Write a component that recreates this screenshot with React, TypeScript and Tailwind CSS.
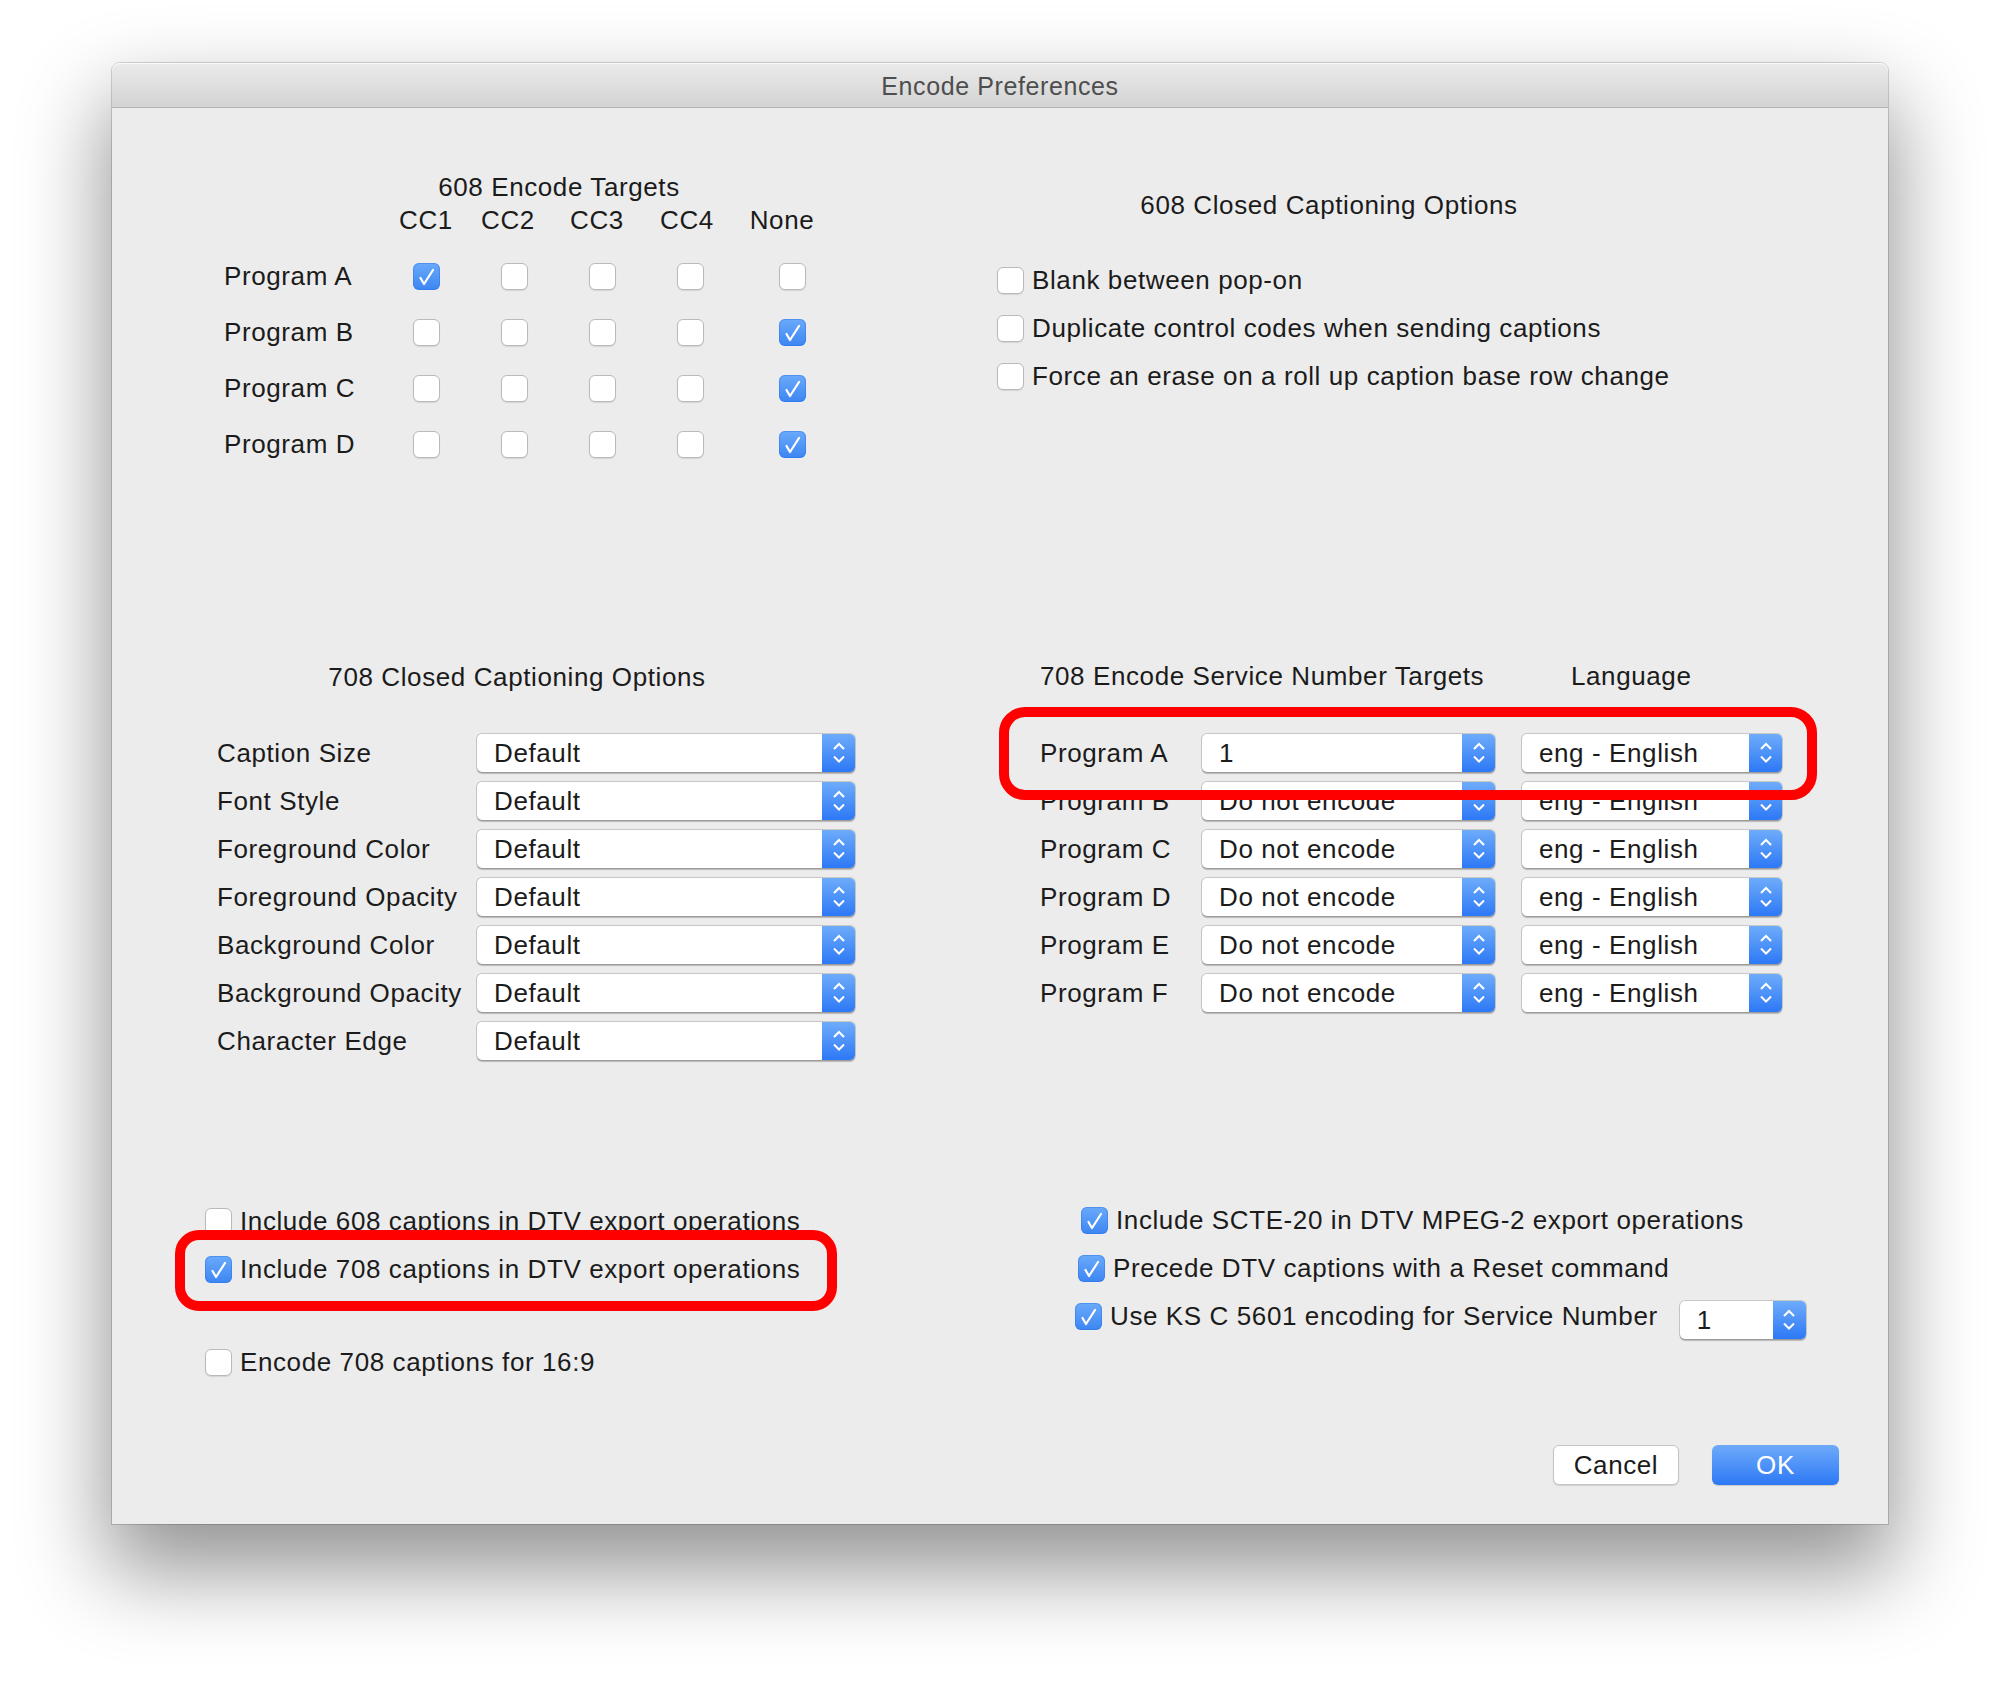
import React from 'react';

const programs608 = ['Program A', 'Program B', 'Program C', 'Program D'];
const checked608: Record<string, number> = {'Program A': 0, 'Program B': 4, 'Program C': 4, 'Program D': 4};

const headers608 = [
  {label: 'CC1', cls: ''},
  {label: 'CC2', cls: 'pr-[12px]'},
  {label: 'CC3', cls: 'pr-[10px]'},
  {label: 'CC4', cls: 'pr-[6px]'},
  {label: 'None', cls: 'pr-[20px]'}
];

const options708 = [
  'Caption Size',
  'Font Style',
  'Foreground Color',
  'Foreground Opacity',
  'Background Color',
  'Background Opacity',
  'Character Edge'
];

const services708 = [
  {name: 'Program A', value: '1'},
  {name: 'Program B', value: 'Do not encode'},
  {name: 'Program C', value: 'Do not encode'},
  {name: 'Program D', value: 'Do not encode'},
  {name: 'Program E', value: 'Do not encode'},
  {name: 'Program F', value: 'Do not encode'}
];

function Check({checked}: {checked?: boolean}) {
  if (checked) {
    return (
      <span className="flex h-[27px] w-[27px] shrink-0 items-center justify-center rounded-[6px] bg-gradient-to-b from-[#6aaafa] to-[#3c85f3] shadow-[inset_0_0_0_1px_rgba(45,115,230,0.45)]">
        <svg width="27" height="27" viewBox="0 0 27 27">
          <path d="M7.5 15 L11 21 L20 7" fill="none" stroke="white" strokeWidth="2.2" strokeLinecap="round" strokeLinejoin="round" />
        </svg>
      </span>
    );
  }
  return <span className="h-[27px] w-[27px] shrink-0 rounded-[6px] border border-[#bababa] bg-white shadow-[0_1px_1px_rgba(0,0,0,0.1)]" />;
}

function Stepper() {
  return (
    <span className="flex w-[33px] shrink-0 items-center justify-center rounded-r-[5px] bg-gradient-to-b from-[#6eabfa] to-[#2c78f5]">
      <svg width="14" height="24" viewBox="0 0 14 24">
        <path d="M2 8 L7 3 L12 8 M2 15.5 L7 20.5 L12 15.5" fill="none" stroke="white" strokeWidth="2" />
      </svg>
    </span>
  );
}

function Select({value, w}: {value: string; w: string}) {
  return (
    <div className={`flex h-[38px] ${w} rounded-[5px] bg-white shadow-[0_0_0_1px_rgba(0,0,0,0.15),0_1.5px_1px_rgba(0,0,0,0.22)]`}>
      <span className="flex flex-1 items-center pl-[17px] leading-none">{value}</span>
      <Stepper />
    </div>
  );
}

function CheckRow({label, checked, cls = ''}: {label: string; checked?: boolean; cls?: string}) {
  return (
    <div className={`flex h-[48px] items-center gap-[8px] ${cls}`}>
      <Check checked={checked} />
      <span>{label}</span>
    </div>
  );
}

export default function App() {
  return (
    <div className="h-[1684px] w-[2000px] overflow-hidden bg-white pl-[112px] pt-[63px]">
      <div className="relative h-[1461px] w-[1776px] rounded-t-[8px] bg-[#ececec] font-['Liberation_Sans',Arial,sans-serif] text-[26px] tracking-[0.6px] text-[#1b1b1b] shadow-[0_42px_85px_6px_rgba(0,0,0,0.42),0_0_0_1px_rgba(0,0,0,0.16)]">
        {/* title bar */}
        <div className="flex h-[45px] items-center justify-center rounded-t-[8px] border-b border-[#b3b3b3] bg-gradient-to-b from-[#ebebeb] to-[#d3d3d3] pt-[3px] text-[25px] tracking-[0.6px] text-[#4e4e4e] shadow-[inset_0_1px_0_rgba(255,255,255,0.8)]">
          Encode Preferences
        </div>

        {/* 608 */}
        <div className="flex h-[552px]">
          <div className="ml-[112px] w-[773px] pt-[62px]">
            <div className="flex h-[34px] w-[670px] items-center justify-center">608 Encode Targets</div>
            <div className="-mt-[3px] grid h-[34px] grid-cols-[158px_88px_88px_88px_88px_116px] items-center">
              <span />
              {headers608.map((h) => (
                <span key={h.label} className={`text-center ${h.cls}`}>{h.label}</span>
              ))}
            </div>
            <div className="mt-[13px]">
              {programs608.map((p) => (
                <div key={p} className="grid h-[56px] grid-cols-[158px_88px_88px_88px_88px_116px] items-center">
                  <span>{p}</span>
                  {[0, 1, 2, 3, 4].map((i) => (
                    <span key={i} className="flex justify-center">
                      <Check checked={checked608[p] === i} />
                    </span>
                  ))}
                </div>
              ))}
            </div>
          </div>
          <div className="flex-1 pt-[80px]">
            <div className="flex h-[34px] w-[664px] items-center justify-center">608 Closed Captioning Options</div>
            <div className="mt-[34px]">
              <CheckRow label="Blank between pop-on" />
              <CheckRow label="Duplicate control codes when sending captions" />
              <CheckRow label="Force an erase on a roll up caption base row change" />
            </div>
          </div>
        </div>

        {/* 708 */}
        <div className="flex h-[536px]">
          <div className="ml-[105px] w-[823px]">
            <div className="flex h-[34px] w-[600px] items-center justify-center">708 Closed Captioning Options</div>
            <div className="mt-[35px]">
              {options708.map((o) => (
                <div key={o} className="flex h-[48px] items-center">
                  <span className="w-[260px]">{o}</span>
                  <Select value="Default" w="w-[378px]" />
                </div>
              ))}
            </div>
          </div>
          <div className="flex-1">
            <div className="-mt-[3px] grid h-[34px] grid-cols-[162px_293px_27px_260px] items-center">
              <span className="col-span-3">708 Encode Service Number Targets</span>
              <span className="pl-[49px]">Language</span>
            </div>
            <div className="mt-[38px]">
              {services708.map((s) => (
                <div key={s.name} className="grid h-[48px] grid-cols-[162px_293px_27px_260px] items-center">
                  <span>{s.name}</span>
                  <Select value={s.value} w="w-[293px]" />
                  <span />
                  <Select value="eng - English" w="w-[260px]" />
                </div>
              ))}
            </div>
          </div>
        </div>

        {/* export options */}
        <div className="flex h-[328px] flex-col">
          <div className="flex h-[249px]">
            <div className="ml-[93px] w-[876px] pt-[1px]">
              <CheckRow label="Include 608 captions in DTV export operations" />
              <CheckRow label="Include 708 captions in DTV export operations" checked />
              <CheckRow label="Encode 708 captions for 16:9" cls="mt-[45px]" />
            </div>
            <div className="flex-1">
              <CheckRow label="Include SCTE-20 in DTV MPEG-2 export operations" checked />
              <CheckRow label="Precede DTV captions with a Reset command" checked cls="-ml-[3px]" />
              <div className="-ml-[6px] flex h-[48px] items-center">
                <CheckRow label="Use KS C 5601 encoding for Service Number" checked />
                <div className="ml-[22px] pt-[8px]">
                  <Select value="1" w="w-[126px]" />
                </div>
              </div>
            </div>
          </div>
          <div className="flex justify-end gap-[33px] pr-[49px]">
            <button className="h-[40px] w-[126px] rounded-[6px] border border-[#c4c4c4] bg-white text-[26px] tracking-[0.6px] text-[#1b1b1b] shadow-[0_1px_1px_rgba(0,0,0,0.12)]">
              Cancel
            </button>
            <button className="h-[40px] w-[127px] rounded-[6px] bg-gradient-to-b from-[#6eaafa] to-[#2c78f5] text-[26px] tracking-[0.6px] text-white shadow-[0_1px_1px_rgba(0,0,0,0.15)]">
              OK
            </button>
          </div>
        </div>

        {/* highlight marks */}
        <div className="pointer-events-none absolute left-[887px] top-[644px] h-[93px] w-[818px] rounded-[26px] border-[10px] border-[#fe0000]" />
        <div className="pointer-events-none absolute left-[63px] top-[1167px] h-[81px] w-[662px] rounded-[24px] border-[10px] border-[#fe0000]" />
      </div>
    </div>
  );
}
